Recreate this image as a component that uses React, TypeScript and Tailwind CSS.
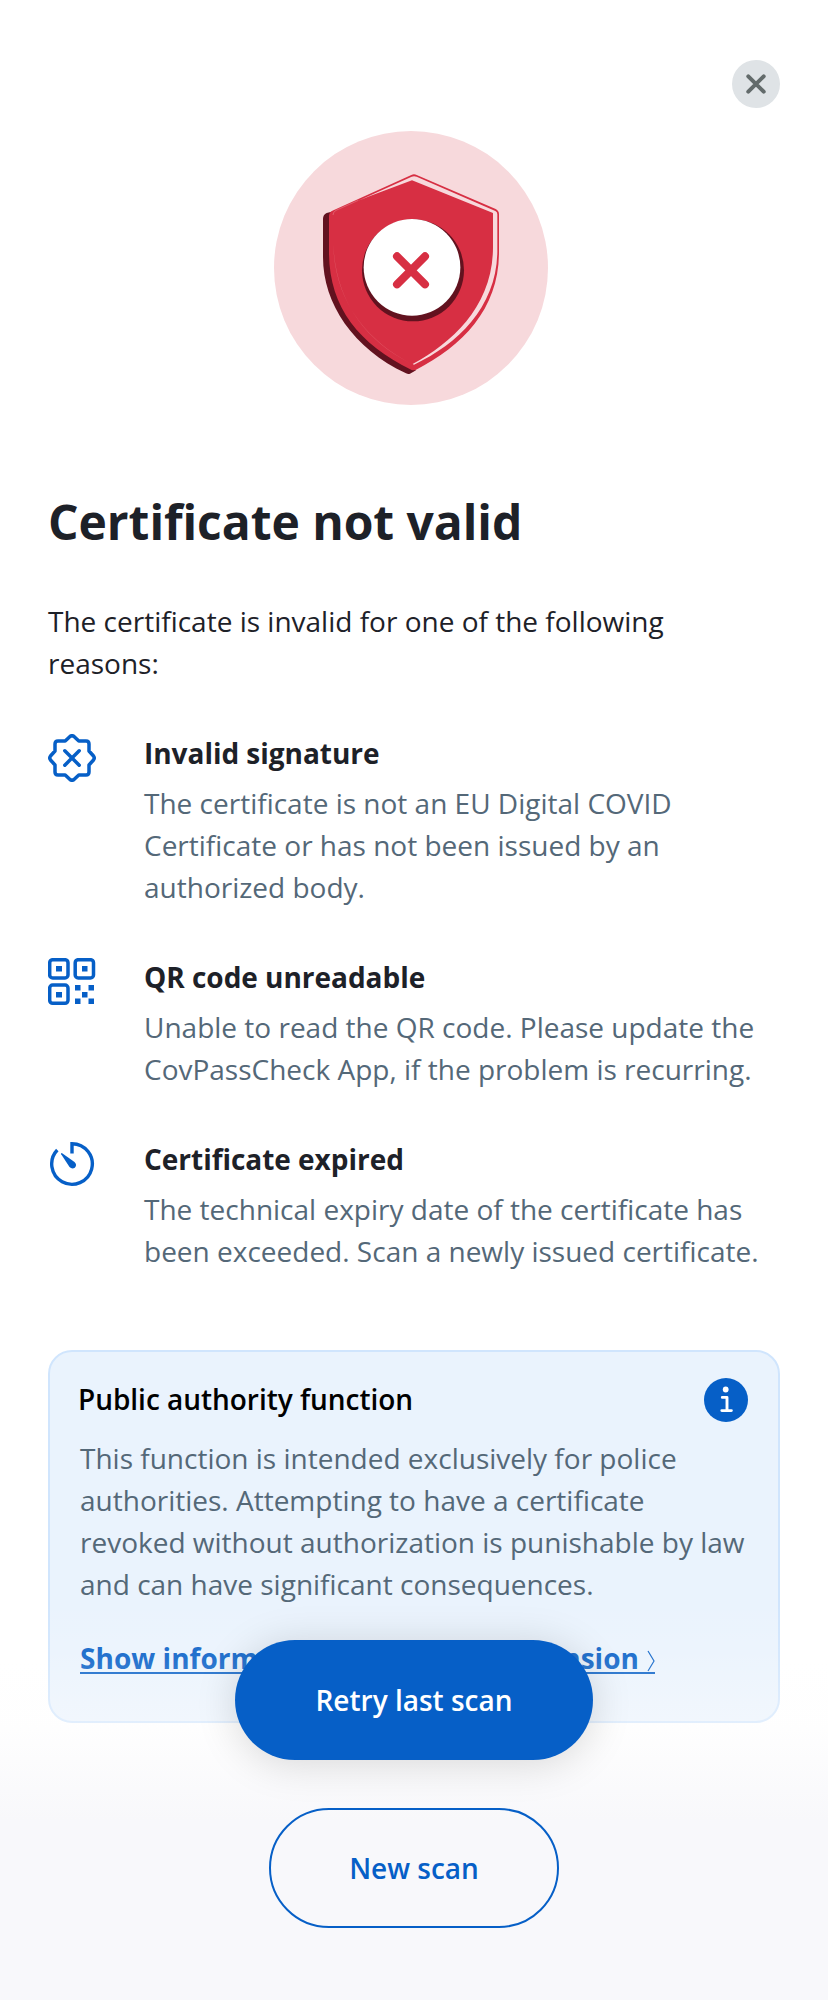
import type { ReactNode } from "react";

function InvalidShield() {
  return (
    <svg className="block h-[274px] w-[274px]" viewBox="72 62 822 822" fill="none">
      <circle cx="483" cy="473" r="411" fill="#f7d9dc" />
      <path d="M219 326Q219 313 230 308L262 300V460C275 590 350 700 498 780L480 790Q475 793 468 789C310 715 219 580 219 440Z" fill="#62121f" />
      <path d="M237 318Q237 306 247 301L484 194Q492 190 500 194L737 296Q747 301 747 312V425C747 595 640 705 497 779Q491 781 485 779C325 700 237 590 237 425Z" fill="#d72f43" />
      <path d="M325 271L485 199Q492 196 500 199L736 302Q742 305 742 312V425C739 590 625 700 492 763L488 761C610 695 729 585 729 410V308L486 210L360 257Z" fill="#f7d9dc" />
      <path d="M249 314Q249 305 258 300L325 270" stroke="#e5717f" strokeWidth="2" />
      <path d="M250 400C252 570 350 690 480 758C345 690 256 570 250 400Z" fill="#e2606d" />
      <ellipse cx="489" cy="480" rx="153" ry="153" fill="#62121f" />
      <circle cx="486" cy="471" r="145" fill="#fff" />
      <path d="M441 438L525 522M525 438L441 522" stroke="#d72f43" strokeWidth="24" strokeLinecap="round" />
    </svg>
  );
}

function SignatureIcon() {
  return (
    <svg className="block size-12" viewBox="0 0 48 48" fill="none" stroke="#065fc7" strokeWidth="3.5" strokeLinejoin="round" strokeLinecap="round">
      <path d="M22 2.5Q24 1 26 2.5L30.800 7H38Q41 7 41 10V17L45.500 22Q47 24 45.500 26L41 31V38Q41 41 38 41H30.800L26 45.500Q24 47 22 45.500L17.200 41H10Q7 41 7 38V31L2.500 26Q1 24 2.500 22L7 17V10Q7 7 10 7H17.200Z" />
      <path d="M16.800 16.800L31.200 31.200M31.200 16.800L16.800 31.200" />
    </svg>
  );
}

function QrIcon() {
  return (
    <svg className="block size-12" viewBox="0 0 48 48" fill="#065fc7">
      <g fill="none" stroke="#065fc7" strokeWidth="3.5">
        <rect x="1.700" y="1.700" width="18.300" height="18.300" rx="3" />
        <rect x="27.200" y="1.700" width="18.300" height="18.300" rx="3" />
        <rect x="1.700" y="27" width="18.300" height="18.300" rx="3" />
      </g>
      <path d="M8 8h6v5.500h-6zM34 8h5.500v5.500h-5.500zM8 34h6v5.500h-6zM27 27h5.500v5.500H27zM40.500 27H46v5.500h-5.500zM34 34h5.500v5.500H34zM27 40.500h5.500V46H27zM40.500 40.500H46V46h-5.500z" />
    </svg>
  );
}

function TimerIcon() {
  return (
    <svg className="block size-12" viewBox="0 0 48 48" fill="none">
      <path d="M24 13.500V3.700A20.300 20.300 0 1 1 9.300 10" stroke="#065fc7" strokeWidth="3.400" />
      <path d="M13.800 13L26.500 22Q29.500 25 26.800 27.700Q24 29.500 21.500 27L13.200 14.300Q12.800 12.800 13.800 13Z" fill="#065fc7" />
    </svg>
  );
}

function InfoIcon() {
  return (
    <svg className="block size-11" viewBox="0 0 44 44" fill="none">
      <circle cx="22" cy="22" r="22" fill="#065fc7" />
      <circle cx="21.700" cy="11.500" r="2.900" fill="#fff" />
      <path d="M18.300 19.400H23V32.600M17.800 32.600H27.400" stroke="#fff" strokeWidth="2.900" strokeLinecap="round" strokeLinejoin="round" />
    </svg>
  );
}

function Reason({ icon, title, children }: { icon: ReactNode; title: string; children: ReactNode }) {
  return (
    <li className="flex gap-12">
      <div className="w-12 shrink-0 pt-0.5">{icon}</div>
      <div className="flex flex-col gap-2">
        <h2 className="font-bold tracking-[-0.03px] text-[#1d2128]">{title}</h2>
        <p className="whitespace-nowrap text-[#546878]">{children}</p>
      </div>
    </li>
  );
}

export default function App() {
  return (
    <main className="relative h-[2000px] w-[828px] overflow-hidden bg-white font-['Open_Sans','Noto_Sans',sans-serif] text-[28px] leading-[42px] text-[#1d2128]">
      <div className="flex h-[131px] justify-end pt-[60px] pr-12">
        <button aria-label="Close" className="flex size-12 items-center justify-center rounded-full bg-[#dfe3e6]">
          <svg className="size-12" viewBox="0 0 48 48" fill="none">
            <path d="M16.300 16.300L31.700 31.700M31.700 16.300L16.300 31.700" stroke="#636b6b" strokeWidth="4" strokeLinecap="round" />
          </svg>
        </button>
      </div>
      <div className="pl-[274px]">
        <InvalidShield />
      </div>

      <section className="px-12 pt-[81px]">
        <h1 className="text-[48px] leading-[72px] font-bold tracking-[-0.05px]">Certificate not valid</h1>
        <p className="mt-[42px] whitespace-nowrap">
          The certificate is invalid for one of the following
          <br />
          reasons:
        </p>
        <ul className="mt-12 flex flex-col gap-12">
          <Reason icon={<SignatureIcon />} title="Invalid signature">
            The certificate is not an EU Digital COVID
            <br />
            Certificate or has not been issued by an
            <br />
            authorized body.
          </Reason>
          <Reason icon={<QrIcon />} title="QR code unreadable">
            Unable to read the QR code. Please update the
            <br />
            CovPassCheck App, if the problem is recurring.
          </Reason>
          <Reason icon={<TimerIcon />} title="Certificate expired">
            The technical expiry date of the certificate has
            <br />
            been exceeded. Scan a newly issued certificate.
          </Reason>
        </ul>

        <div className="mt-[78px] h-[373px] rounded-3xl border-2 border-[#d0e5fd] bg-[#eaf3fd] pt-[26px] pr-[30px] pl-[30px]">
          <div className="flex h-[59px] items-start justify-between">
            <h2 className="-ml-0.5 font-semibold tracking-[-0.03px] text-black">Public authority function</h2>
            <InfoIcon />
          </div>
          <p className="whitespace-nowrap text-[#546878]">
            This function is intended exclusively for police
            <br />
            authorities. Attempting to have a certificate
            <br />
            revoked without authorization is punishable by law
            <br />
            and can have significant consequences.
          </p>
          <a className="mt-8 flex h-[37px] w-[575px] justify-between border-b-2 border-[#065fc7] font-bold whitespace-nowrap text-[#065fc7]">
            <span className="tracking-[0.03px]">Show information about your extension</span>
            <svg className="mt-[13px] h-[22px] w-2" viewBox="0 0 8 22" fill="none" stroke="currentColor" strokeWidth="1.200">
              <path d="M1 1L7 11L1 21" />
            </svg>
          </a>
        </div>
      </section>

      <div className="absolute inset-x-0 bottom-0 flex h-[400px] flex-col items-center gap-12 bg-[linear-gradient(to_bottom,rgba(255,255,255,0)_0px,rgba(255,255,255,0.13)_60px,rgba(253,253,253,0.4)_125px,#f8f8fb_220px)] pt-10">
        <button className="h-[120px] w-[358px] rounded-full bg-[#065fc7] font-semibold text-white shadow-[0_4px_40px_rgba(0,0,0,0.15)]">Retry last scan</button>
        <button className="h-[120px] w-[290px] rounded-full border-2 border-[#065fc7] font-semibold text-[#065fc7]">New scan</button>
      </div>
    </main>
  );
}
